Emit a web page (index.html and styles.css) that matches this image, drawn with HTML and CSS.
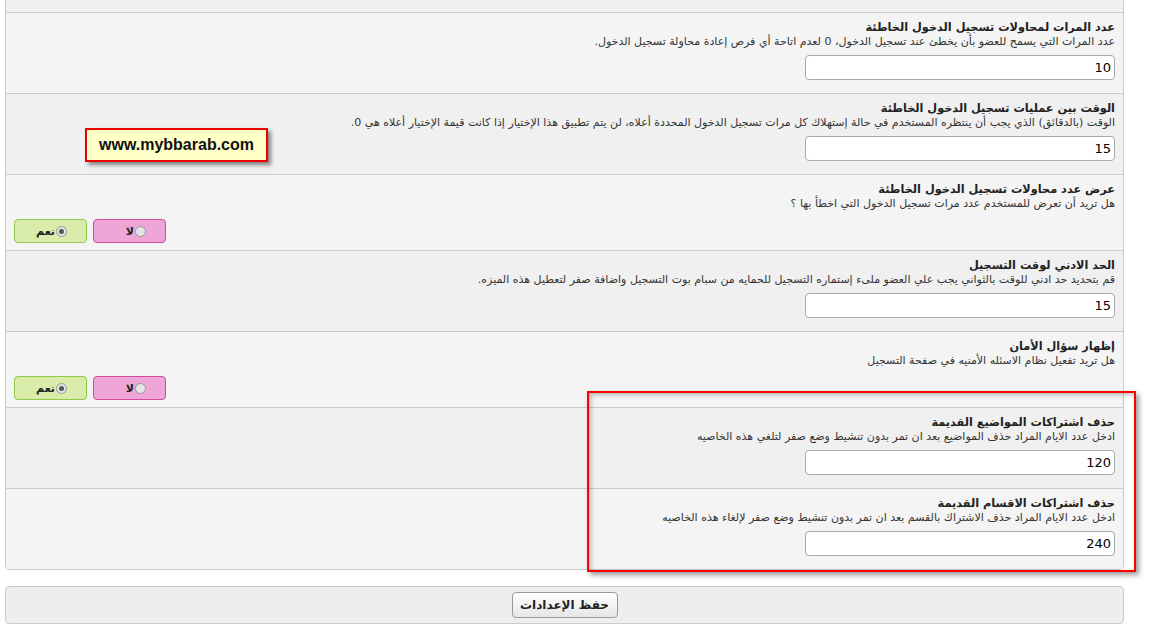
FILE: index.html
```html
<!DOCTYPE html>
<html lang="ar">
<head>
  <meta charset="UTF-8">
  <title>إعدادات التسجيل</title>
  <link rel="stylesheet" href="styles.css">
</head>
<body>
  <div class="settings">
    <div class="row-tail"></div>

    <div class="row light">
      <div class="title">عدد المرات لمحاولات تسجيل الدخول الخاطئة</div>
      <div class="desc">عدد المرات التي يسمح للعضو بأن يخطئ عند تسجيل الدخول، 0 لعدم اتاحة أي فرص إعادة محاولة تسجيل الدخول.</div>
      <input type="text" class="num" value="10">
    </div>

    <div class="row dark">
      <div class="title">الوقت بين عمليات تسجيل الدخول الخاطئة</div>
      <div class="desc">الوقت (بالدقائق) الذي يجب أن ينتظره المستخدم في حالة إستهلاك كل مرات تسجيل الدخول المحددة أعلاه، لن يتم تطبيق هذا الإختيار إذا كانت قيمة الإختيار أعلاه هي 0.</div>
      <input type="text" class="num" value="15">
    </div>

    <div class="row light">
      <div class="title">عرض عدد محاولات تسجيل الدخول الخاطئة</div>
      <div class="desc">هل تريد أن تعرض للمستخدم عدد مرات تسجيل الدخول التي اخطأ بها ؟</div>
      <div class="yesno">
        <label class="choice yes"><span class="radio on"></span>نعم</label>
        <label class="choice no"><span class="radio"></span>لا</label>
      </div>
    </div>

    <div class="row dark">
      <div class="title">الحد الادني لوقت التسجيل</div>
      <div class="desc">قم بتحديد حد ادني للوقت بالثواني يجب علي العضو ملىء إستماره التسجيل للحمايه من سبام بوت التسجيل واضافة صفر لتعطيل هذه الميزه.</div>
      <input type="text" class="num" value="15">
    </div>

    <div class="row light">
      <div class="title">إظهار سؤال الأمان</div>
      <div class="desc">هل تريد تفعيل نظام الاسئله الأمنيه في صفحة التسجيل</div>
      <div class="yesno">
        <label class="choice yes"><span class="radio on"></span>نعم</label>
        <label class="choice no"><span class="radio"></span>لا</label>
      </div>
    </div>

    <div class="row dark">
      <div class="title">حذف اشتراكات المواضيع القديمة</div>
      <div class="desc">ادخل عدد الايام المراد حذف المواضيع بعد ان تمر بدون تنشيط وضع صفر لتلغي هذه الخاصيه</div>
      <input type="text" class="num" value="120">
    </div>

    <div class="row light last">
      <div class="title">حذف اشتراكات الاقسام القديمة</div>
      <div class="desc">ادخل عدد الايام المراد حذف الاشتراك بالقسم بعد ان تمر بدون تنشيط وضع صفر لإلغاء هذه الخاصيه</div>
      <input type="text" class="num" value="240">
    </div>
  </div>

  <div class="save-bar">
    <button type="button" class="save">حفظ الإعدادات</button>
  </div>

  <div class="watermark">www.mybbarab.com</div>
  <div class="highlight"></div>
</body>
</html>
```

FILE: styles.css
```css
body {
  margin: 0;
  background: #fff;
  font-family: "DejaVu Sans", Tahoma, sans-serif;
  color: #333;
  width: 1167px;
  height: 629px;
  overflow: hidden;
  position: relative;
}

.settings {
  direction: rtl;
  margin: 0 0 0 5px;
  width: 1117px;
  border: 1px solid #ccc;
  border-top: none;
  border-radius: 0 0 5px 5px;
  overflow: hidden;
}

.row-tail {
  height: 12px;
  background: #f0f0f0;
}

.row {
  border-top: 1px solid #cdcdcd;
  padding: 8px 8px 13px;
}

.row.light { background: #f4f4f4; }
.row.dark { background: #f0f0f0; }

.title {
  font-size: 11.3px;
  font-weight: bold;
  line-height: 14px;
  color: #222;
}

.desc {
  font-size: 11px;
  line-height: 14px;
  color: #333;
}

input.num {
  display: block;
  box-sizing: border-box;
  width: 310px;
  height: 25px;
  margin-top: 6px;
  padding: 0 3px;
  border: 1px solid #aaa;
  border-radius: 4px;
  background: #fff;
  font-family: "DejaVu Sans", sans-serif;
  font-size: 13px;
  color: #000;
  text-align: right;
}

.yesno {
  direction: ltr;
  display: flex;
  gap: 6px;
  margin-top: 8px;
  margin-bottom: -6px;
}

.choice {
  box-sizing: border-box;
  width: 73px;
  height: 24px;
  display: flex;
  flex-direction: row-reverse;
  align-items: center;
  padding-right: 19px;
  border-radius: 4px;
  font-size: 11px;
  font-weight: bold;
  color: #222;
}

.choice.yes {
  background: #d9ecaa;
  border: 1px solid #93c84a;
}

.choice.no {
  background: #eda6d7;
  border: 1px solid #d04a9c;
}

.radio {
  width: 9px;
  height: 9px;
  border-radius: 50%;
  border: 1px solid #999;
  background: #e4e4e4;
  margin-left: 1px;
  position: relative;
}

.radio.on::after {
  content: "";
  position: absolute;
  left: 2px;
  top: 2px;
  width: 5px;
  height: 5px;
  border-radius: 50%;
  background: #555;
}

.save-bar {
  box-sizing: border-box;
  margin: 16px 0 0 5px;
  width: 1119px;
  height: 38px;
  background: #eee;
  border: 1px solid #ccc;
  border-radius: 4px;
  display: flex;
  justify-content: center;
  align-items: center;
}

.save {
  width: 106px;
  height: 26px;
  font-family: "DejaVu Sans", sans-serif;
  font-size: 12px;
  font-weight: bold;
  color: #222;
  background: linear-gradient(#fff, #e6e6e6);
  border: 1px solid #999;
  border-radius: 4px;
  padding: 0;
}

/* overlays drawn on top of the screenshot */
.watermark {
  position: absolute;
  left: 85px;
  top: 128px;
  box-sizing: border-box;
  width: 183px;
  height: 34px;
  border: 2px solid #e00;
  background: #ffffc8;
  box-shadow: 3px 3px 4px rgba(0,0,0,0.45);
  font-family: "Liberation Sans", Arial, sans-serif;
  font-size: 16px;
  font-weight: bold;
  color: #111;
  display: flex;
  align-items: center;
  justify-content: center;
}

.highlight {
  position: absolute;
  left: 587px;
  top: 391px;
  width: 545px;
  height: 177px;
  border: 2px solid #f00;
  box-shadow: 3px 3px 5px rgba(0,0,0,0.4), inset 2px 2px 4px rgba(0,0,0,0.25);
}
```
